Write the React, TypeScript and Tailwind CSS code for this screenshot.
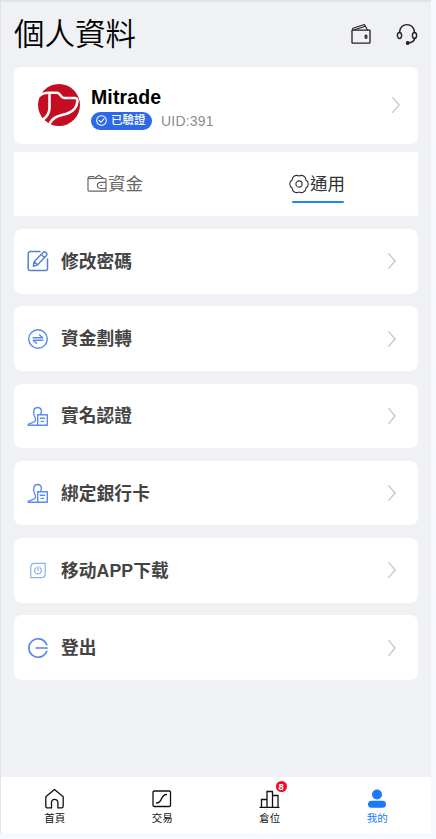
import type { ReactNode } from 'react'

interface IconProps {
  children: ReactNode
  className?: string
  box?: string
}

function Icon({ children, className = 'h-[22px] w-[22px]', box = '0 0 22 22' }: IconProps) {
  return (
    <svg
      viewBox={box}
      className={`block shrink-0 ${className}`}
      fill="none"
      stroke="currentColor"
      strokeWidth="1.4"
      strokeLinecap="round"
      strokeLinejoin="round"
      aria-hidden
    >
      {children}
    </svg>
  )
}

function Arrow() {
  return (
    <Icon className="h-4 w-2 text-[#c4c4c6]" box="0 0 8 16">
      <path d="M.7.7 7.2 8 .7 15.3" strokeWidth="1.2" />
    </Icon>
  )
}

function EditIcon() {
  return (
    <Icon className="h-[22px] w-[22px] text-[#5580d0]">
      <path d="M13 1.6H3.2A2 2 0 0 0 1.2 3.6v15a2 2 0 0 0 2 2h15.3a2 2 0 0 0 2-2V9" strokeWidth="1.5" />
      <path d="m6.3 16.3.8-4.6 9-9.300q1.200-1.200 2.900.2 1.700 1.500.4 3l-8.800 9.200zM14.300 4.600l3.200 3M7.200 11.800l3.300 2.900" />
    </Icon>
  )
}

function TransferIcon() {
  return (
    <Icon className="h-[22px] w-[22px] text-[#5b8bee]">
      <circle cx="11" cy="11" r="9.3" />
      <path d="M15.8 9.8H6.200M15.800 9.800l-3.300-2.900M6.200 12.300h9.600M6.200 12.300l3.300 2.900" />
    </Icon>
  )
}

function VerifyIcon() {
  return (
    <Icon className="h-[22px] w-[22px] text-[#5b8bee]">
      <path d="M10.500 20.300H1.200v-1c1.800-1.300 6.200-1.500 7.200-3.500.6-1.600-.3-3.400-1.100-5-1.700-4.600-.2-8.300 3.200-8.300 4 0 4.900 3.700 3 7" />
      <path d="M10.700 9.700h9.600v10.600h-9.600zM13.400 13.300h4.200M14.300 16.400h2.200" />
    </Icon>
  )
}

function PowerIcon() {
  return (
    <Icon className="h-[22px] w-[22px] text-[#8eafea]">
      <path d="M7.500 4.300H18.200V15q0 3.700-3.700 3.700H3.800V8q0-3.700 3.700-3.700z" strokeWidth="1.2" />
      <path d="M9 8.800a3.400 3.400 0 1 0 4 0M11 7.500v4" strokeWidth="1.2" />
    </Icon>
  )
}

function LogoutIcon() {
  return (
    <Icon className="h-[22px] w-[22px] text-[#5585e5]">
      <path d="M19.700 7.700a9.200 9.200 0 1 0 0 6.600M9.200 11h10.900" strokeWidth="1.7" />
    </Icon>
  )
}

const menu = [
  { label: '修改密碼', icon: <EditIcon /> },
  { label: '資金劃轉', icon: <TransferIcon /> },
  { label: '實名認證', icon: <VerifyIcon /> },
  { label: '綁定銀行卡', icon: <VerifyIcon /> },
  { label: '移动APP下载', icon: <PowerIcon /> },
  { label: '登出', icon: <LogoutIcon /> },
]

function Header() {
  return (
    <header className="flex h-[64.5px] items-center justify-between pr-[13px] pl-[13px]">
      <h1 className="text-[30.5px] leading-none font-[350] text-black">個人資料</h1>
      <div className="flex items-center gap-6 text-[#222]">
        <Icon>
          <path d="M2 7.200h18v12.200q0 .8-.8.8H2.800q-.8 0-.8-.8z" strokeWidth="1.3" />
          <path d="M2.800 6.800V5.300L14.500 1.600 17.300 6.800M4.500 6.800l10.800-3.500" strokeWidth="1.1" />
          <ellipse cx="16" cy="13.700" rx=".9" ry="1.600" strokeWidth="1.3" />
        </Icon>
        <Icon>
          <path d="M3.500 9.500C3.800-1 18.200-1 18.500 9.500M19 15c-.8 3-3.500 4.800-7 5" />
          <ellipse cx="3.500" cy="12.500" rx="2.100" ry="3" />
          <ellipse cx="18.500" cy="12.500" rx="2.100" ry="3" />
          <circle cx="11.700" cy="20" r="1.200" fill="currentColor" />
        </Icon>
      </div>
    </header>
  )
}

function Profile() {
  return (
    <section className="flex h-[77px] items-center rounded-[7px] bg-white pr-[18px] pl-6">
      <svg viewBox="0 0 42 42" className="h-[42px] w-[42px] shrink-0" aria-hidden>
        <circle cx="21" cy="21" r="21" fill="#c40d22" />
        <g fill="none" stroke="#fff" strokeWidth="2.6" strokeLinejoin="round">
          <path d="M.5 12.500C4 9 7 8.700 11 8.700h8c3.500 0 3.500 5.300 7 5.300h10.500q3.300 0 2.900 3.300c-.6 6.500-3.700 9.700-9.400 12-7 2.600-14.500 2.200-18.500 10.500" />
          <path d="M11.500 9v15c0 5.500-2.500 8.500-6.500 11.700" />
        </g>
      </svg>
      <div className="ml-[11px] flex-1 pt-[5px]">
        <p className="text-[19.5px] leading-[22px] font-bold tracking-[0.12px] text-black">Mitrade</p>
        <div className="mt-1 flex items-center">
          <span className="flex h-[18px] w-[61px] items-center rounded-full bg-[#2d68e8] pl-[5px] text-[11.5px] leading-none font-medium text-white">
            <Icon className="mr-[4px] h-[11px] w-[11px]" box="0 0 12 12">
              <circle cx="6" cy="6" r="5.300" strokeWidth="1.1" />
              <path d="m3.500 6 1.900 1.900 3.300-3.700" strokeWidth="1.2" />
            </Icon>
            已驗證
          </span>
          <span className="ml-[9px] text-sm leading-[18px] tracking-[0.2px] text-[#8c8c8c]">UID:391</span>
        </div>
      </div>
      <Arrow />
    </section>
  )
}

function Tabs() {
  return (
    <nav className="mt-[8.5px] grid h-[64px] grid-cols-2 bg-white text-[17.5px] leading-none">
      <div className="flex items-center justify-center text-[#666]">
        <Icon className="mr-px h-[20px] w-[20px]" box="0 0 20 20">
          <path d="M19 8.300V5.500q0-1-1-1H1V16q0 1.200 1.200 1.200H19v-2.700M1 4.500Q1 2.600 3 2.600h4M7.400 4.400l4.500-3.200 4.700 3.200M19 8.300h-5.500a3.100 3.100 0 0 0 0 6.200H19z" strokeWidth="1.2" />
          <path d="M14 11.400h.3" strokeWidth="1.5" />
        </Icon>
        <span className="pt-0.5">資金</span>
      </div>
      <div className="relative flex items-center justify-center text-[#303133]">
        <Icon className="mr-px h-[20px] w-[20px]" box="0 0 20 20">
          <path
            d="M10 2a4.600 4.600 0 0 1 6.900 4 4.600 4.600 0 0 1 0 8 4.600 4.600 0 0 1-6.900 4 4.600 4.600 0 0 1-6.900-4 4.600 4.600 0 0 1 0-8A4.600 4.600 0 0 1 10 2z"
            strokeWidth="1.1"
          />
          <circle cx="10" cy="10" r="3.100" strokeWidth="1.1" />
        </Icon>
        <span className="pt-0.5">通用</span>
        <span className="absolute bottom-[13.5px] left-[76px] h-0.5 w-[52px] rounded-full bg-[#1989fa]" />
      </div>
    </nav>
  )
}

function BottomNav() {
  return (
    <nav className="grid h-14 grid-cols-4 bg-white text-[10.5px] leading-3 text-[#111]">
      <div className="flex flex-col items-center pt-[11px]">
        <Icon>
          <path d="M1.800 8.700 10.500 1.500 19.200 8.700v9.500q0 1.700-1.700 1.700h-3.600v-5.400a3.200 3.200 0 0 0-6.400 0v5.400H3.500q-1.700 0-1.700-1.700z" strokeWidth="1.3" />
        </Icon>
        <span className="mt-0.5">首頁</span>
      </div>
      <div className="flex flex-col items-center pt-[11px]">
        <Icon>
          <rect x="2" y="3" width="17.500" height="15.500" rx="1.200" strokeWidth="1.3" />
          <path d="M5.500 15c6.500 0 3.500-8.500 10-8.500" />
        </Icon>
        <span className="mt-0.5">交易</span>
      </div>
      <div className="flex flex-col items-center pt-[11px]">
        <div className="relative">
          <Icon>
            <path d="M1 19.300h19M2.500 19v-7.500H8M8 19V3.500h5.500V19M13.500 7.500H19V19" strokeWidth="1.3" strokeLinejoin="miter" />
          </Icon>
          <span className="absolute -top-[7px] left-[17px] flex h-[11px] w-[11px] items-center justify-center rounded-full bg-[#ee0a24] text-[9.5px] leading-none font-bold text-white">
            8
          </span>
        </div>
        <span className="mt-0.5">倉位</span>
      </div>
      <div className="flex flex-col items-center pt-[11px] text-[#1a7af8]">
        <Icon>
          <circle cx="11" cy="6.500" r="5" fill="currentColor" stroke="none" />
          <rect x="2" y="12.700" width="18" height="7" rx="3.500" fill="currentColor" stroke="none" />
        </Icon>
        <span className="mt-0.5">我的</span>
      </div>
    </nav>
  )
}

export default function App() {
  return (
    <div className="h-[839px] w-[436px] overflow-hidden bg-[#f8f9fe] font-['Liberation_Sans','Noto_Sans_CJK_TC',sans-serif]">
      <div className="flex h-[833px] w-[431px] flex-col border-t-2 border-l border-[#e0e3eb] bg-[#f0f1f5]">
        <Header />
        <main className="flex-1 px-[13px]">
          <Profile />
          <Tabs />
          <div className="mt-[13px] flex flex-col gap-[12.8px]">
            {menu.map((item) => (
              <div
                key={item.label}
                className="flex h-[64.5px] items-center rounded-[8px] bg-white pr-[22px] pl-[13px]"
              >
                {item.icon}
                <span className="ml-[12px] flex-1 pt-px text-[17.7px] leading-6 font-bold tracking-[0.1px] text-[#444]">
                  {item.label}
                </span>
                <Arrow />
              </div>
            ))}
          </div>
        </main>
        <BottomNav />
      </div>
    </div>
  )
}
